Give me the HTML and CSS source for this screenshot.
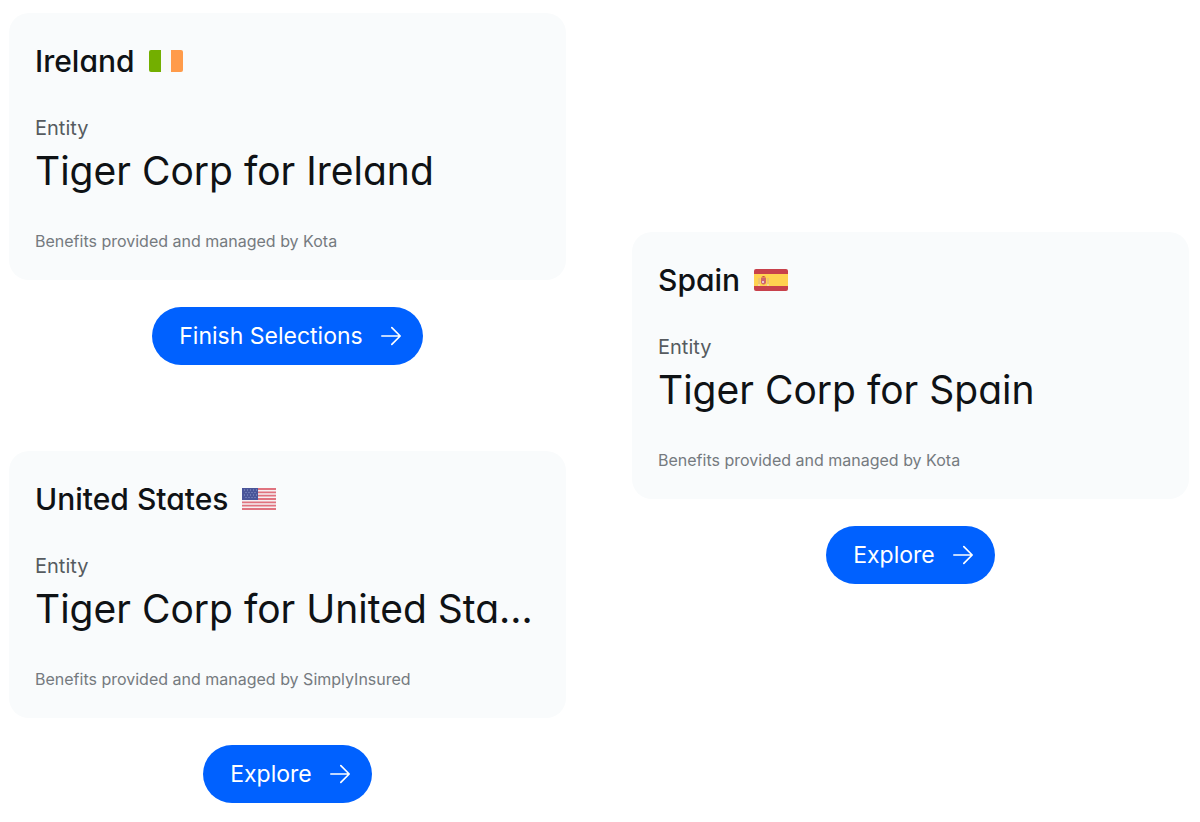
FILE: index.html
```html
<!DOCTYPE html>
<html lang="en">
<head>
	<meta charset="UTF-8">
	<meta name="viewport" content="width=device-width, initial-scale=1">
	<title>Benefits by entity</title>
	<link rel="stylesheet" href="styles.css">
</head>
<body>
	<main class="entities">
		<div class="column">
			<section class="entity">
				<div class="card">
					<h2 class="country">
						Ireland
						<svg class="flag" viewBox="0 0 34 22" aria-hidden="true">
							<rect width="34" height="22" rx="2" fill="#f8f9f9"/>
							<path d="M2 0H12V22H2Q0 22 0 20V2Q0 0 2 0Z" fill="#73af00"/>
							<path d="M22 0H32Q34 0 34 2V20Q34 22 32 22H22Z" fill="#ff9b4a"/>
						</svg>
					</h2>
					<p class="label">Entity</p>
					<h3 class="name">Tiger Corp for Ireland</h3>
					<p class="provider">Benefits provided and managed by Kota</p>
				</div>
				<button class="action" type="button">
					Finish Selections
					<svg class="arrow" viewBox="0 0 24 24" aria-hidden="true"><path d="M1 12H23M13 2L23 12L13 22"/></svg>
				</button>
			</section>

			<section class="entity">
				<div class="card">
					<h2 class="country">
						United States
						<svg class="flag" viewBox="0 0 34 22" aria-hidden="true">
							<rect width="34" height="22" rx="1" fill="#f6f0f2"/>
							<path d="M0 1H34M0 4.3H34M0 7.7H34M0 11H34M0 14.3H34M0 17.7H34M0 21H34" stroke="#e0737f" stroke-width="1.8"/>
							<rect width="16" height="12" fill="#4a5599"/>
							<path d="M2 2H15M3.5 4.5H15M2 7H15M3.5 9.5H15" stroke="#8d9ccb" stroke-width="1" stroke-dasharray="1 2"/>
						</svg>
					</h2>
					<p class="label">Entity</p>
					<h3 class="name">Tiger Corp for United States</h3>
					<p class="provider">Benefits provided and managed by SimplyInsured</p>
				</div>
				<button class="action" type="button">
					Explore
					<svg class="arrow" viewBox="0 0 24 24" aria-hidden="true"><path d="M1 12H23M13 2L23 12L13 22"/></svg>
				</button>
			</section>
		</div>

		<div class="column">
			<section class="entity">
				<div class="card">
					<h2 class="country">
						Spain
						<svg class="flag" viewBox="0 0 34 22" aria-hidden="true">
							<rect width="34" height="22" rx="2" fill="#c8414b"/>
							<rect y="5" width="34" height="12" fill="#ffd250"/>
							<path d="M5 9V16M14 9V16" stroke="#e0b08c" stroke-width="1"/>
							<path d="M7 9H12V14Q9.5 17 7 14Z" fill="#d0646b"/>
							<path d="M7 8.5Q9.500 5.5 12 8.5Z" fill="#c8414b"/>
							<path d="M8 12H10V14H8Z" fill="#e8c4d0"/>
							<path d="M4 16H6M13 16H15" stroke="#f5ead0" stroke-width="1"/>
						</svg>
					</h2>
					<p class="label">Entity</p>
					<h3 class="name">Tiger Corp for Spain</h3>
					<p class="provider">Benefits provided and managed by Kota</p>
				</div>
				<button class="action" type="button">
					Explore
					<svg class="arrow" viewBox="0 0 24 24" aria-hidden="true"><path d="M1 12H23M13 2L23 12L13 22"/></svg>
				</button>
			</section>
		</div>
	</main>
</body>
</html>
```

FILE: styles.css
```css
* {
	box-sizing: border-box;
}

body {
	margin: 0;
	background: #fff;
	color: #0f1215;
	font-family: Inter, "Liberation Sans", sans-serif;
}

h2, h3, p {
	margin: 0;
}

.entities {
	display: grid;
	grid-template-columns: 1fr 1fr;
	align-items: center;
	gap: 66px;
	padding: 13px 11px 18px 9px;
}

.column {
	display: flex;
	flex-direction: column;
	gap: 86px;
	min-width: 0;
}

.entity {
	display: flex;
	flex-direction: column;
	align-items: center;
	gap: 27px;
}

.card {
	width: 100%;
	padding: 28px 26px 27px;
	border-radius: 20px;
	background: #f9fbfc;
}

.country {
	display: flex;
	align-items: center;
	gap: 14px;
	margin-bottom: 35px;
	font-size: 30px;
	font-weight: 500;
	line-height: 40px;
}
/* single-storey a for the headings */
.country, .name {
	font-feature-settings: "cv11";
}

.flag {
	width: 34px;
	height: 22px;
}

.label {
	margin-bottom: 7px;
	color: #565b60;
	font-size: 20px;
	line-height: 24px;
}

.name {
	margin-bottom: 34px;
	overflow: hidden;
	font-size: 39px;
	font-weight: 400;
	line-height: 48px;
	text-overflow: ellipsis;
	white-space: nowrap;
}

.provider {
	color: #757a7f;
	font-size: 16px;
	line-height: 24px;
}

.action {
	display: flex;
	align-items: center;
	gap: 18px;
	height: 58px;
	padding: 0 22px 0 27px;
	border: none;
	border-radius: 29px;
	background: #0061ff;
	color: #fff;
	font-family: inherit;
	font-size: 23px;
	cursor: pointer;
}
.action:hover {
	background: #0052db;
}

.arrow {
	width: 20px;
	height: 20px;
	fill: none;
	stroke: currentColor;
	stroke-width: 2;
	stroke-linecap: round;
	stroke-linejoin: round;
}
```
